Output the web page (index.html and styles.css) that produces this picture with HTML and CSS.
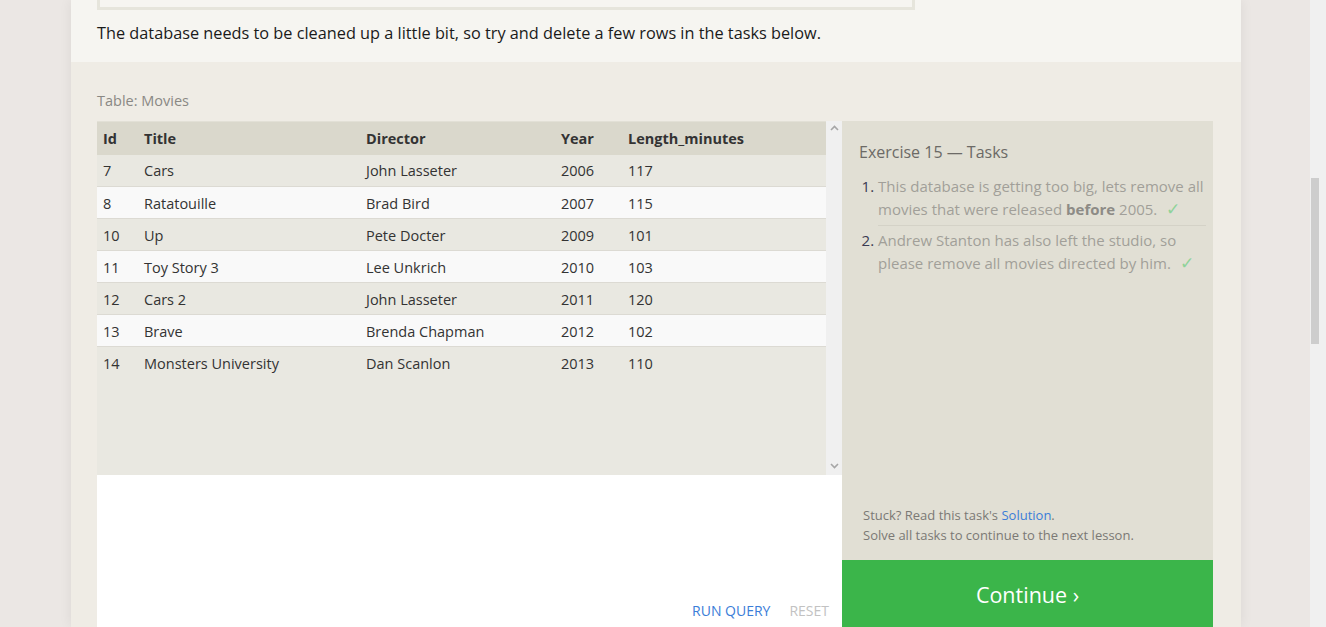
FILE: index.html
```html
<!DOCTYPE html>
<html>
<head>
<meta charset="utf-8">
<link rel="stylesheet" href="styles.css">
</head>
<body>
<div class="page">
  <section class="intro">
    <div class="prev-box"></div>
    <p class="intro-text">The database needs to be cleaned up a little bit, so try and delete a few rows in the tasks below.</p>
  </section>
  <section class="exercise">
    <div class="table-label">Table: Movies</div>
    <div class="widget">
      <div class="left-col">
        <div class="table-area">
          <div class="table-scroll">
            <table class="movies">
              <thead>
                <tr><th class="c-id">Id</th><th class="c-title">Title</th><th class="c-dir">Director</th><th class="c-year">Year</th><th>Length_minutes</th></tr>
              </thead>
              <tbody>
                <tr><td>7</td><td>Cars</td><td>John Lasseter</td><td>2006</td><td>117</td></tr>
                <tr><td>8</td><td>Ratatouille</td><td>Brad Bird</td><td>2007</td><td>115</td></tr>
                <tr><td>10</td><td>Up</td><td>Pete Docter</td><td>2009</td><td>101</td></tr>
                <tr><td>11</td><td>Toy Story 3</td><td>Lee Unkrich</td><td>2010</td><td>103</td></tr>
                <tr><td>12</td><td>Cars 2</td><td>John Lasseter</td><td>2011</td><td>120</td></tr>
                <tr><td>13</td><td>Brave</td><td>Brenda Chapman</td><td>2012</td><td>102</td></tr>
                <tr><td>14</td><td>Monsters University</td><td>Dan Scanlon</td><td>2013</td><td>110</td></tr>
              </tbody>
            </table>
          </div>
          <div class="inner-scrollbar">
            <svg class="chev" width="9" height="6" viewBox="0 0 9 6"><path d="M1 5 L4.5 1.5 L8 5" fill="none" stroke="#a6a6a6" stroke-width="1.6"/></svg>
            <svg class="chev" width="9" height="6" viewBox="0 0 9 6"><path d="M1 1 L4.5 4.5 L8 1" fill="none" stroke="#a6a6a6" stroke-width="1.6"/></svg>
          </div>
        </div>
        <div class="editor">
          <div class="editor-actions">
            <span class="run">RUN QUERY</span>
            <span class="reset">RESET</span>
          </div>
        </div>
      </div>
      <aside class="tasks">
        <div class="tasks-body">
          <h3 class="tasks-title">Exercise 15 — Tasks</h3>
          <ol class="task-list">
            <li>This database is getting too big, lets remove all movies that were released <b>before</b> 2005.<span class="check">✓</span></li>
            <li>Andrew Stanton has also left the studio, so please remove all movies directed by him.<span class="check">✓</span></li>
          </ol>
        </div>
        <div class="stuck">
          <div>Stuck? Read this task's <span class="link">Solution</span>.</div>
          <div>Solve all tasks to continue to the next lesson.</div>
        </div>
        <div class="continue">Continue ›</div>
      </aside>
    </div>
  </section>
</div>
<div class="page-scrollbar">
  <div class="sb-thumb"></div>
</div>
</body>
</html>
```

FILE: styles.css
```css
html, body {
  margin: 0;
  padding: 0;
  height: 100%;
  overflow: hidden;
}
body {
  background: #ebe7e4;
  font-family: "Open Sans", "Noto Sans", sans-serif;
  color: #222;
}
.page {
  width: 1170px;
  margin-left: 71px;
  min-height: 100%;
  background: #efece5;
  box-shadow: 0 0 12px rgba(0, 0, 0, 0.07);
}
.intro {
  background: #f6f5f1;
  height: 62px;
  padding: 0 26px;
  box-sizing: border-box;
}
.prev-box {
  width: 812px;
  height: 7px;
  border: 3px solid #e6e5dc;
  border-top: none;
}
.intro-text {
  margin: 11px 0 0;
  font-size: 16.3px;
  line-height: 24px;
  color: #1a1a1a;
}
.exercise {
  padding: 29px 28px 0 26px;
}
.table-label {
  font-size: 14.5px;
  color: #8a8884;
  line-height: 20px;
  margin-bottom: 10px;
}
.widget {
  display: flex;
}
.left-col {
  width: 745px;
  display: flex;
  flex-direction: column;
}
.table-area {
  height: 354px;
  flex: none;
  display: flex;
  background: #e9e8e1;
}
.table-scroll {
  flex: 1;
}
.movies {
  width: 100%;
  border-collapse: collapse;
  font-size: 14.5px;
  color: #333;
}
.movies th {
  background: #dad8cc;
  text-align: left;
  font-weight: 700;
  height: 33px;
  padding: 0 6px;
  border-top: 1px solid #e2e0d6;
  box-sizing: border-box;
}
.movies td {
  height: 32px;
  padding: 1px 6px 0;
  border-top: 1px solid #dcdad3;
  box-sizing: border-box;
}
.movies tbody tr:first-child td {
  border-top: none;
}
.movies tbody tr:nth-child(odd) {
  background: #e9e8e1;
}
.movies tbody tr:nth-child(even) {
  background: #f9f9f9;
}
.c-id { width: 41px; }
.c-title { width: 222px; }
.c-dir { width: 195px; }
.c-year { width: 67px; }
.inner-scrollbar {
  width: 16px;
  background: #f0f0f0;
  display: flex;
  flex-direction: column;
  justify-content: space-between;
  align-items: center;
  padding: 4px 0 6px;
  box-sizing: border-box;
}
.editor {
  flex: none;
  height: 152px;
  background: #ffffff;
  display: flex;
  align-items: flex-end;
  justify-content: flex-end;
}
.editor-actions {
  display: flex;
  gap: 19px;
  padding: 0 13px 0 0;
  font-size: 14px;
  line-height: 20px;
  margin-bottom: 6px;
}
.run { color: #3b7dd8; }
.reset { color: #c2c2c2; }
.tasks {
  width: 371px;
  background: #e1dfd4;
  display: flex;
  flex-direction: column;
}
.tasks-body {
  flex: 1;
  padding: 19px 7px 0 17px;
}
.tasks-title {
  margin: 0 0 11px;
  font-size: 16px;
  font-weight: 400;
  color: #6c6a66;
  line-height: 24px;
}
.task-list {
  margin: 0;
  padding-left: 19px;
  font-size: 15px;
  line-height: 23px;
  color: #a19f99;
}
.task-list li {
  padding: 0 0 4px;
}
.task-list li::marker {
  color: #3a3a52;
}
.task-list li + li {
  border-top: 1px solid #d4d2c7;
  padding-top: 3px;
}
.task-list b {
  color: #8d8b86;
}
.check {
  color: #8fd39a;
  margin-left: 9px;
  font-size: 17px;
  line-height: 0;
}
.stuck {
  padding: 0 0 15px 21px;
  font-size: 13px;
  line-height: 20px;
  color: #7b7975;
}
.link { color: #3b7dd8; }
.continue {
  background: #3bb54a;
  color: #ffffff;
  height: 67px;
  flex: none;
  display: flex;
  justify-content: center;
  align-items: flex-start;
  padding-top: 21px;
  font-size: 21.5px;
  line-height: 28px;
  box-sizing: border-box;
}
.page-scrollbar {
  position: fixed;
  top: 0;
  right: 0;
  width: 16px;
  height: 100%;
  background: #f0f0f0;
}
.sb-thumb {
  width: 8px;
  height: 166px;
  margin: 178px 0 0 1px;
  background: #cdcdcd;
}
```
